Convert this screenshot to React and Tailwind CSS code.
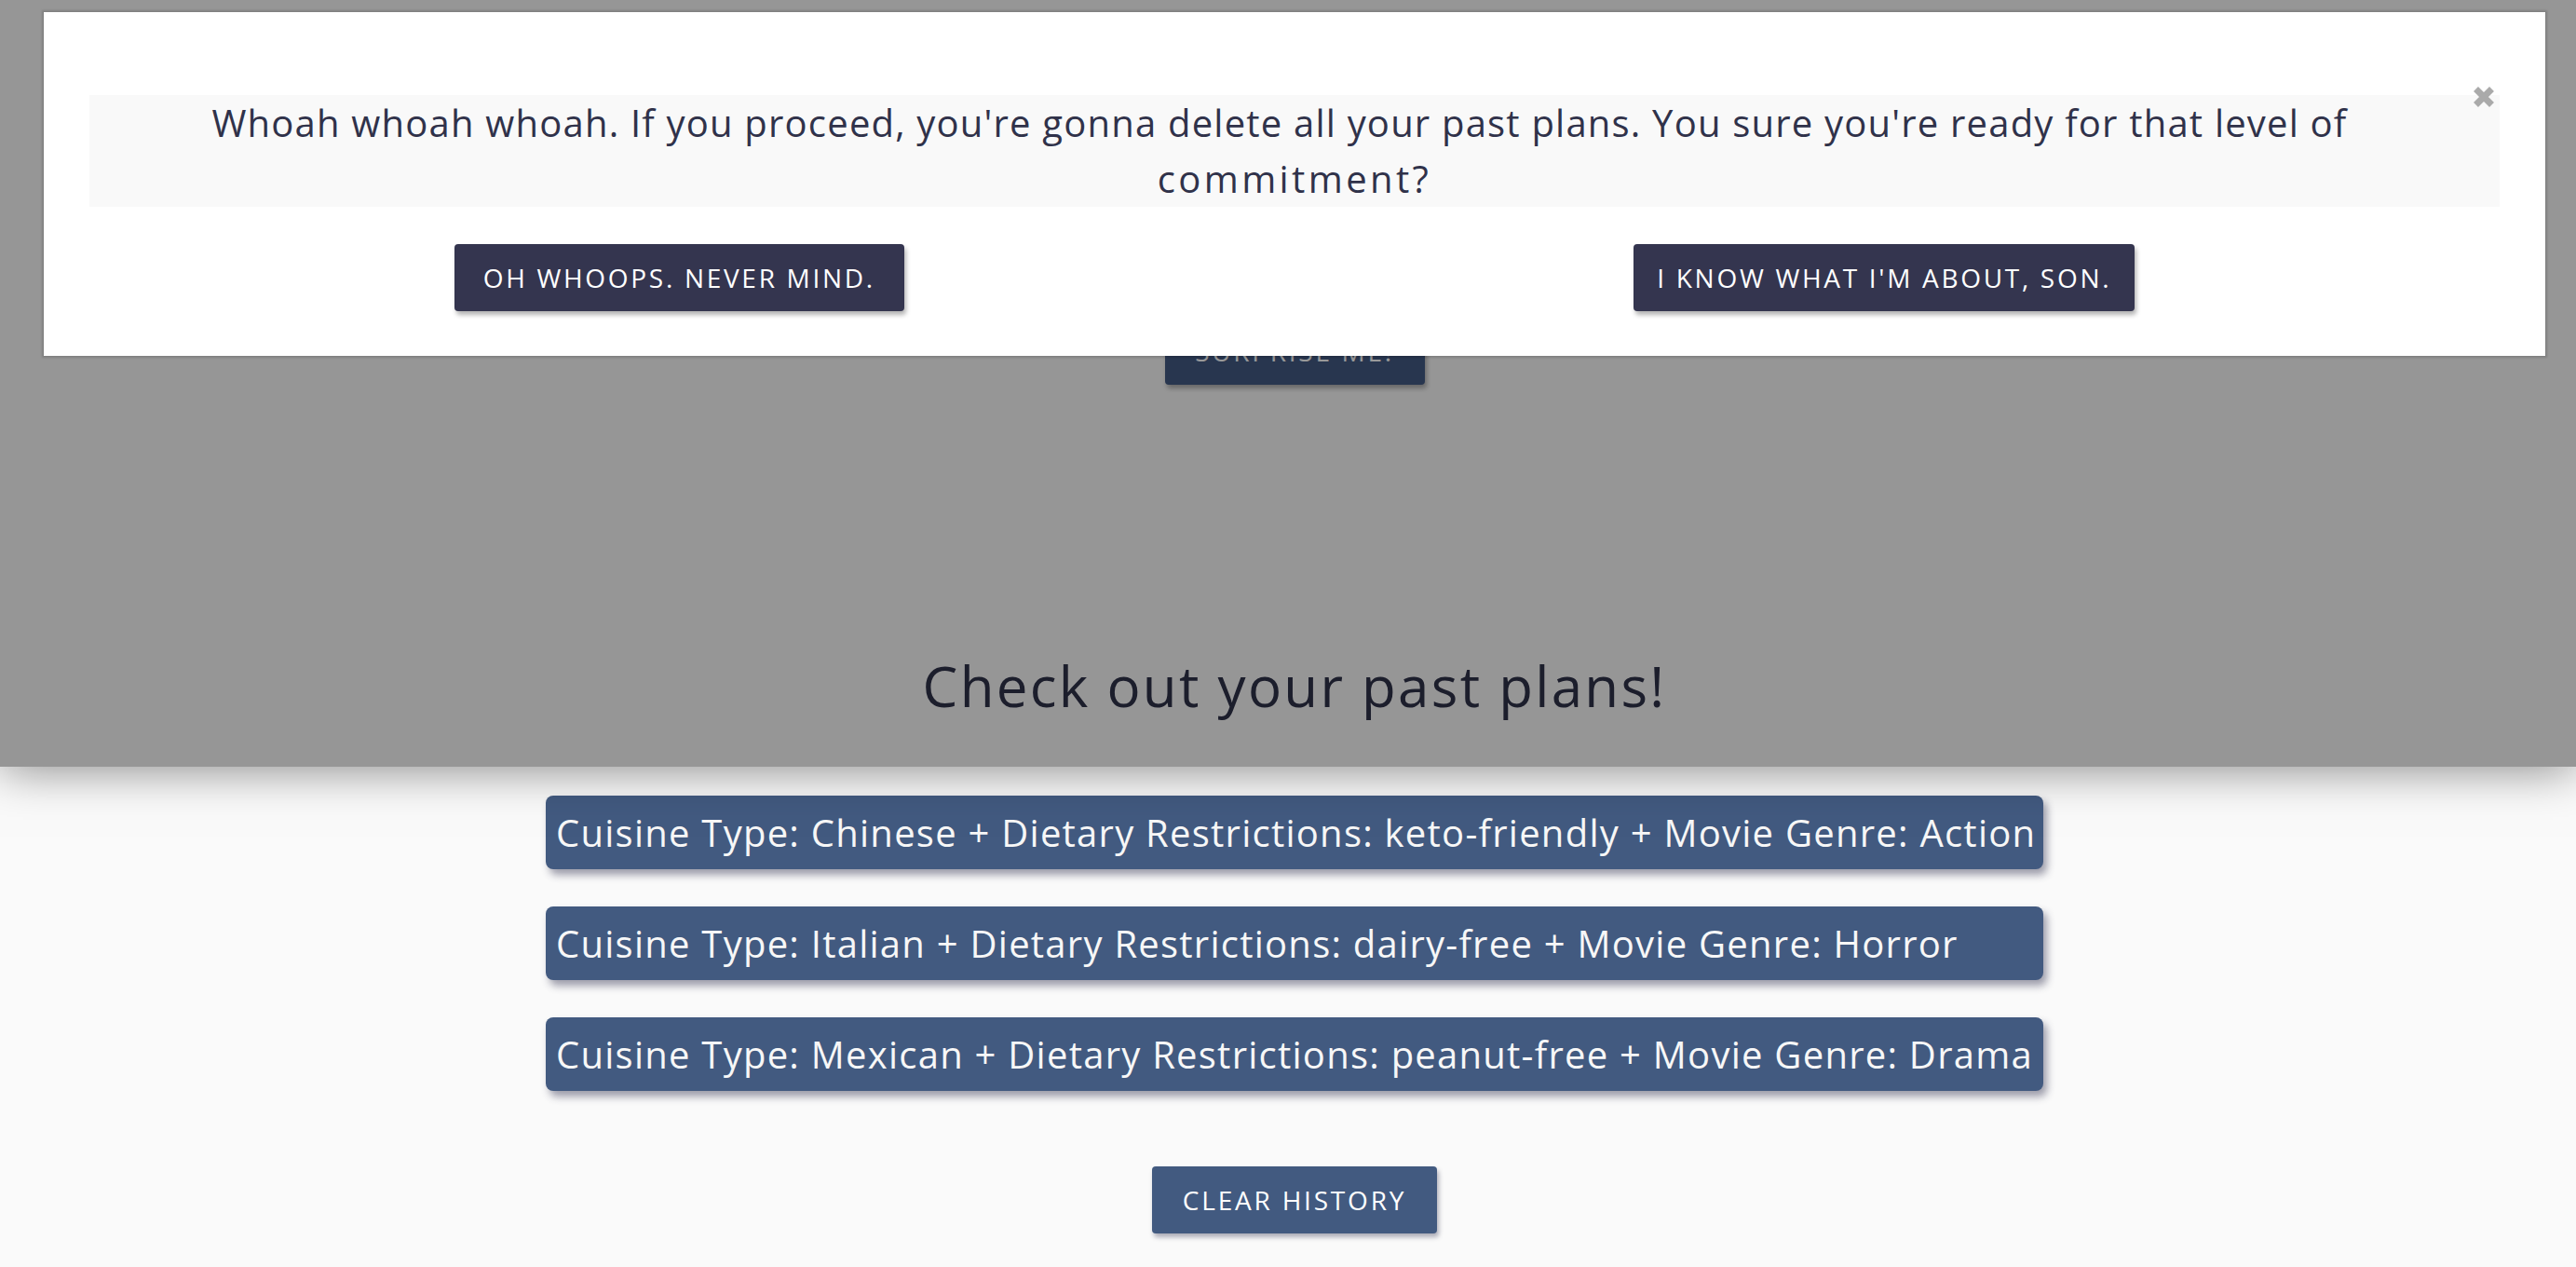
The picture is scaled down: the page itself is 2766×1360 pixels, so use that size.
import React from "react";

const plans = [
  "Cuisine Type: Chinese + Dietary Restrictions: keto-friendly + Movie Genre: Action",
  "Cuisine Type: Italian + Dietary Restrictions: dairy-free + Movie Genre: Horror",
  "Cuisine Type: Mexican + Dietary Restrictions: peanut-free + Movie Genre: Drama",
];

export default function App() {
  return (
    <div className="relative w-[2766px] h-[1360px] overflow-hidden bg-[#fafafa] font-['Open_Sans',sans-serif] text-[#30324a]">
      {/* Page content */}
      <div className="flex flex-col items-center pt-[341px] pl-[14px]">
        <button className="w-[279px] h-[72px] rounded-[4px] bg-[#435a84] text-white text-[28px] leading-[72px] tracking-[2.7px] uppercase shadow-[2px_4px_5px_rgba(0,0,0,0.3)]">
          Surprise Me!
        </button>

        <h2 className="mt-[287px] h-[72px] text-[60px] leading-[72px] tracking-[2.3px] text-[#30324a]">
          Check out your past plans!
        </h2>

        <div className="mt-[82px] flex flex-col gap-[40px]">
          {plans.map((p) => (
            <div
              key={p}
              className="w-[1608px] h-[79px] flex items-center pl-[11px] rounded-[8px] bg-[#425a80] text-[#f7f7f7] text-[40px] leading-[59px] tracking-[1.25px] whitespace-nowrap shadow-[4px_6px_8px_rgba(40,40,70,0.45)]"
            >
              {p}
            </div>
          ))}
        </div>

        <button className="mt-[81px] w-[306px] h-[72px] rounded-[4px] bg-[#425a80] text-white text-[28px] leading-[72px] tracking-[2.8px] uppercase shadow-[2px_4px_5px_rgba(30,30,60,0.35)]">
          Clear History
        </button>
      </div>

      {/* Overlay */}
      <div className="absolute top-0 left-0 w-full h-[823px] bg-black/40 shadow-[0_0_50px_rgba(0,0,0,0.5)]">
        {/* Modal */}
        <div className="absolute top-[13px] left-[47px] w-[2686px] h-[369px] bg-white shadow-[0_0_2px_2px_rgba(0,0,0,0.15)] pt-[89px] px-[49px]">
          <button className="absolute top-[79px] right-[54px] w-[24px] h-[24px]" aria-label="close">
            <svg viewBox="0 0 24 24" width="24" height="24">
              <path d="M3.5 3.5 L20.5 20.5 M20.5 3.5 L3.5 20.5" stroke="#aaaaaa" strokeWidth="7" strokeLinecap="butt" fill="none" />
            </svg>
          </button>
          <p className="h-[120px] bg-[#f9f9f9] text-center text-[40px] leading-[60px] tracking-[1.2px] text-[#30324a]">
            <span className="pr-[32px]">
              Whoah whoah whoah. If you proceed, you're gonna delete all your past plans. You sure you're ready for that level of
            </span>
            <br />
            <span className="tracking-[3.4px]">commitment?</span>
          </p>
          <div className="mt-[40px] flex justify-around">
            <button className="w-[483px] h-[72px] rounded-[4px] bg-[#34354f] text-white text-[28px] leading-[72px] tracking-[2.7px] uppercase shadow-[2px_4px_5px_rgba(0,0,0,0.3)]">
              Oh whoops. Never mind.
            </button>
            <button className="w-[538px] h-[72px] rounded-[4px] bg-[#34354f] text-white text-[28px] leading-[72px] tracking-[2.7px] uppercase shadow-[2px_4px_5px_rgba(0,0,0,0.3)]">
              I know what I'm about, son.
            </button>
          </div>
        </div>
      </div>
    </div>
  );
}
